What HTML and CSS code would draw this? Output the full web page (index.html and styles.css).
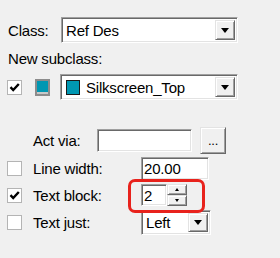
FILE: index.html
```html
<!DOCTYPE html>
<html>
<head>
<meta charset="utf-8">
<link rel="stylesheet" href="styles.css">
</head>
<body>
<div class="panel">
  <div class="row row-class">
    <span class="lbl lbl-class">Class:</span>
    <div class="combo combo-class sunken">
      <span class="combo-text">Ref Des</span>
      <span class="drop raised"><i class="arrow"></i></span>
    </div>
  </div>
  <div class="row row-new">
    <span class="lbl">New subclass:</span>
  </div>
  <div class="row row-sub">
    <span class="chk"><svg viewBox="0 0 15 15" width="15" height="15"><path d="M3.5 7.2 L6.2 10 L11.8 4" fill="none" stroke="#000" stroke-width="2.4"/></svg></span>
    <span class="swatch-btn"></span>
    <div class="combo combo-sub sunken">
      <span class="sw"></span>
      <span class="combo-text">Silkscreen_Top</span>
      <span class="drop raised"><i class="arrow"></i></span>
    </div>
  </div>
  <div class="row row-act">
    <span class="lbl lbl-act">Act via:</span>
    <div class="field field-act sunken"></div>
    <span class="btn-dots raised">...</span>
  </div>
  <div class="row row-opt row-lw">
    <span class="chk chk-empty"></span>
    <span class="lbl lbl-opt">Line width:</span>
    <div class="field field-lw sunken"><span class="ftext">20.00</span></div>
  </div>
  <div class="row row-opt row-tb">
    <span class="chk"><svg viewBox="0 0 15 15" width="15" height="15"><path d="M3.5 7.2 L6.2 10 L11.8 4" fill="none" stroke="#000" stroke-width="2.4"/></svg></span>
    <span class="lbl lbl-opt">Text block:</span>
    <div class="spin">
      <div class="field field-spin sunken"><span class="ftext">2</span></div>
      <div class="spin-btns">
        <span class="sbtn raised"><i class="up"></i></span>
        <span class="sbtn raised"><i class="down"></i></span>
      </div>
    </div>
  </div>
  <div class="row row-opt row-tj">
    <span class="chk chk-empty"></span>
    <span class="lbl lbl-opt">Text just:</span>
    <div class="combo combo-just sunken">
      <span class="combo-text">Left</span>
      <span class="drop raised"><i class="arrow"></i></span>
    </div>
  </div>
  <div class="highlight"></div>
</div>
</body>
</html>
```
FILE: styles.css
```css
* { box-sizing: border-box; }
html, body { margin: 0; padding: 0; }
body {
  background: #f0f0f0;
  width: 280px;
  height: 258px;
  overflow: hidden;
  font-family: "Liberation Sans", Arial, sans-serif;
  font-size: 15px;
  letter-spacing: -0.2px;
  color: #000;
}
.panel {
  position: relative;
  padding: 17px 0 0 7px;
  height: 258px;
}
.row { display: flex; align-items: center; }
.lbl { white-space: nowrap; line-height: 1; }

.sunken {
  background: #fff;
  border-top: 1px solid #a0a0a0;
  border-left: 1px solid #a0a0a0;
  border-right: 1px solid #fff;
  border-bottom: 1px solid #fff;
  box-shadow: inset 1px 1px 0 #696969, inset -1px -1px 0 #e3e3e3;
}
.raised {
  background: #f0f0f0;
  border-top: 1px solid #e3e3e3;
  border-left: 1px solid #e3e3e3;
  border-right: 1px solid #696969;
  border-bottom: 1px solid #696969;
  box-shadow: inset 1px 1px 0 #fff, inset -1px -1px 0 #a0a0a0;
}

.combo { display: flex; align-items: center; padding: 2px; }
.combo-text { flex: 1; white-space: nowrap; line-height: 1; padding-left: 2px; }
.drop {
  width: 20px; height: 100%;
  display: flex; align-items: center; justify-content: center;
}
.arrow {
  width: 0; height: 0;
  border-left: 4px solid transparent;
  border-right: 4px solid transparent;
  border-top: 5px solid #000;
}

/* Row 1 */
.row-class { height: 26px; }
.lbl-class { width: 54px; padding-left: 1px; }
.combo-class { width: 177px; height: 26px; }

/* Row 2 */
.row-new { height: 20px; margin-top: 5px; padding-left: 1px; }

/* Row 3 */
.row-sub { height: 26px; margin-top: 6px; }
.chk {
  width: 15px; height: 15px; flex: none;
  background: #fff;
  border: 1px solid #b4b4b4;
  display: flex; align-items: center; justify-content: center;
}
.chk svg { display: block; margin: -1px; }
.swatch-btn {
  width: 15px; height: 17px; margin-left: 13px;
  border: 2px solid #8c8c8c;
  background: #0097b2;
  box-shadow: inset 0 -2px 0 #c8c8c8;
}
.combo-sub { width: 178px; height: 26px; margin-left: 10px; }
.sw {
  width: 14px; height: 15px; margin-left: 3px; margin-right: 4px; flex: none;
  background: #0097b2;
  border: 1px solid #1a1a1a;
}

/* Row 4 */
.row-act { height: 27px; margin-top: 27px; }
.lbl-act { width: 64px; margin-left: 26px; }
.field-act { width: 95px; height: 23px; }
.btn-dots {
  width: 26px; height: 27px; margin-left: 8px;
  display: flex; align-items: flex-end; justify-content: center;
  font-size: 13px; line-height: 1; padding-bottom: 6px;
}

/* Options */
.row-opt .lbl-opt { width: 108px; margin-left: 11px; }
.row-lw { height: 27px; margin-top: 1px; }
.row-tb { height: 26px; }
.row-tj { height: 29px; }
.field { display: flex; align-items: center; }
.ftext { line-height: 1; padding-left: 2px; }
.field-lw { width: 68px; height: 23px; }
.spin { display: flex; height: 22px; }
.field-spin { width: 26px; height: 22px; }
.spin-btns { display: flex; flex-direction: column; width: 20px; }
.sbtn {
  height: 11px; display: flex; align-items: center; justify-content: center;
}
.up, .down { width: 0; height: 0; border-left: 2.5px solid transparent; border-right: 2.5px solid transparent; }
.up { border-bottom: 3px solid #000; }
.down { border-top: 3px solid #000; }
.combo-just { width: 70px; height: 25px; }

.highlight {
  position: absolute;
  left: 128px; top: 179px;
  width: 77px; height: 34px;
  border: 3px solid #e8221c;
  border-radius: 7px;
}
```
